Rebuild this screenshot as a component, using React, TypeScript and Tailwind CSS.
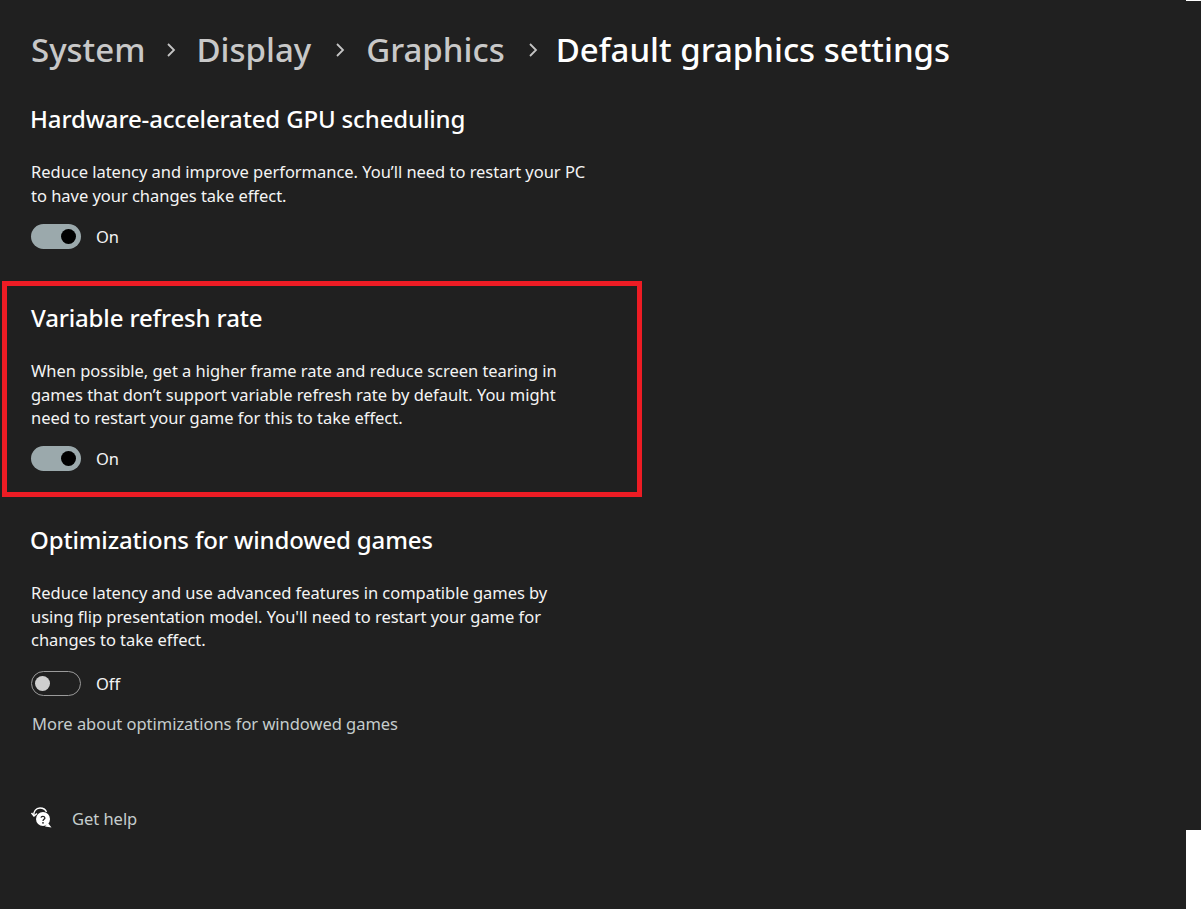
const font = { fontFamily: '"Noto Sans", sans-serif' };

function Toggle({ on }: { on: boolean }) {
  return on ? (
    <div className="flex h-[25px] w-[50px] items-center justify-end rounded-full bg-[#9ba9ac] pr-[5px]">
      <div className="h-[15px] w-[15px] rounded-full bg-black" />
    </div>
  ) : (
    <div className="flex h-[25px] w-[50px] items-center justify-start rounded-full border border-[#9a9a9a] pl-[3px]">
      <div className="h-[15px] w-[15px] rounded-full bg-[#cfcfcf]" />
    </div>
  );
}

function Section({ title, lines, on, titleOffset = "ml-0", toggleGap = "mt-[17px]" }: { title: string; lines: string[]; on: boolean; titleOffset?: string; toggleGap?: string }) {
  return (
    <div className="flex flex-col">
      <div className={`h-[32px] text-[24px] leading-[32px] font-medium tracking-[-0.15px] text-white ${titleOffset}`}>{title}</div>
      <div className="mt-[25px] flex flex-col text-[16.5px] leading-[23.5px] tracking-[-0.03px] text-[#f4f4f4]">
        {lines.map((l) => (
          <div key={l} className="whitespace-nowrap">{l}</div>
        ))}
      </div>
      <div className={`${toggleGap} flex items-center gap-[15px]`}>
        <Toggle on={on} />
        <span className="text-[16.5px] leading-[25px] tracking-[-0.03px] text-[#f4f4f4]">{on ? "On" : "Off"}</span>
      </div>
    </div>
  );
}

function Chevron({ className }: { className: string }) {
  return (
    <svg width="11" height="14" viewBox="0 0 11 14" className={className} fill="none">
      <path d="M2 1 L8 7 L2 13" stroke="#c4c4c4" strokeWidth="1.8" />
    </svg>
  );
}

export default function App() {
  return (
    <div className="flex h-[909px] w-[1201px] bg-white" style={font}>
      <div className="flex w-[1186px] flex-col bg-[#202020] pl-[31px] pt-[27px]">
        <div className="flex h-[46px] items-center whitespace-nowrap text-[33px] font-medium leading-[46px]">
          <span className="text-[#c8c8c8]">System</span>
          <Chevron className="ml-[21px] mr-[19px]" />
          <span className="text-[#c8c8c8]">Display</span>
          <Chevron className="ml-[24px] mr-[20px]" />
          <span className="text-[#c8c8c8]">Graphics</span>
          <Chevron className="ml-[23px] mr-[17px]" />
          <span className="text-white">Default graphics settings</span>
        </div>
        <div className="mt-[30px]">
          <Section
            title="Hardware-accelerated GPU scheduling"
            titleOffset="-ml-[1px]"
            on
            lines={[
              "Reduce latency and improve performance. You’ll need to restart your PC",
              "to have your changes take effect.",
            ]}
          />
        </div>
        <div className="-ml-[29px] mt-[32px] h-[216px] w-[640px] border-[5px] border-[#ed1c24] pl-[24px] pt-[16px]">
          <Section
            title="Variable refresh rate"
            on
            toggleGap="mt-[16.5px]"
            lines={[
              "When possible, get a higher frame rate and reduce screen tearing in",
              "games that don’t support variable refresh rate by default. You might",
              "need to restart your game for this to take effect.",
            ]}
          />
        </div>
        <div className="mt-[27px]">
          <Section
            title="Optimizations for windowed games"
            titleOffset="-ml-[1px]"
            on={false}
            toggleGap="mt-[19.5px]"
            lines={[
              "Reduce latency and use advanced features in compatible games by",
              "using flip presentation model. You'll need to restart your game for",
              "changes to take effect.",
            ]}
          />
        </div>
        <div className="ml-[1px] mt-[16px] text-[16.5px] leading-[24px] tracking-[-0.03px] text-[#c5cdcd]">
          More about optimizations for windowed games
        </div>
        <div className="mt-[71px] flex items-center gap-[20px]">
          <svg width="22" height="24" viewBox="0 0 22 24" fill="none" className="-ml-[1px]">
            <path d="M1.5 6 L4 9 L7 6.5" stroke="#fff" strokeWidth="1.4" />
            <path d="M4 9 C3 4.5 6 1 10 1 C13 1 15.5 2.5 16.5 5" stroke="#fff" strokeWidth="1.4" />
            <circle cx="13" cy="12" r="7" fill="#fff" />
            <path d="M18 16 L21.5 20.5 L15 19.5 Z" fill="#fff" />
            <path d="M11 10.6 C11.3 8.9 14.9 9 14.9 11 C14.9 12.3 13 12.4 13 14" stroke="#202020" strokeWidth="1.3" />
            <circle cx="13" cy="15.8" r="0.9" fill="#202020" />
          </svg>
          <span className="text-[16.5px] leading-[24px] tracking-[-0.03px] text-[#c5cdcd]">Get help</span>
        </div>
      </div>
      <div className="flex w-[15px] flex-col">
        <div className="h-px bg-white" />
        <div className="h-[829px] bg-[#202020]" />
      </div>
    </div>
  );
}
